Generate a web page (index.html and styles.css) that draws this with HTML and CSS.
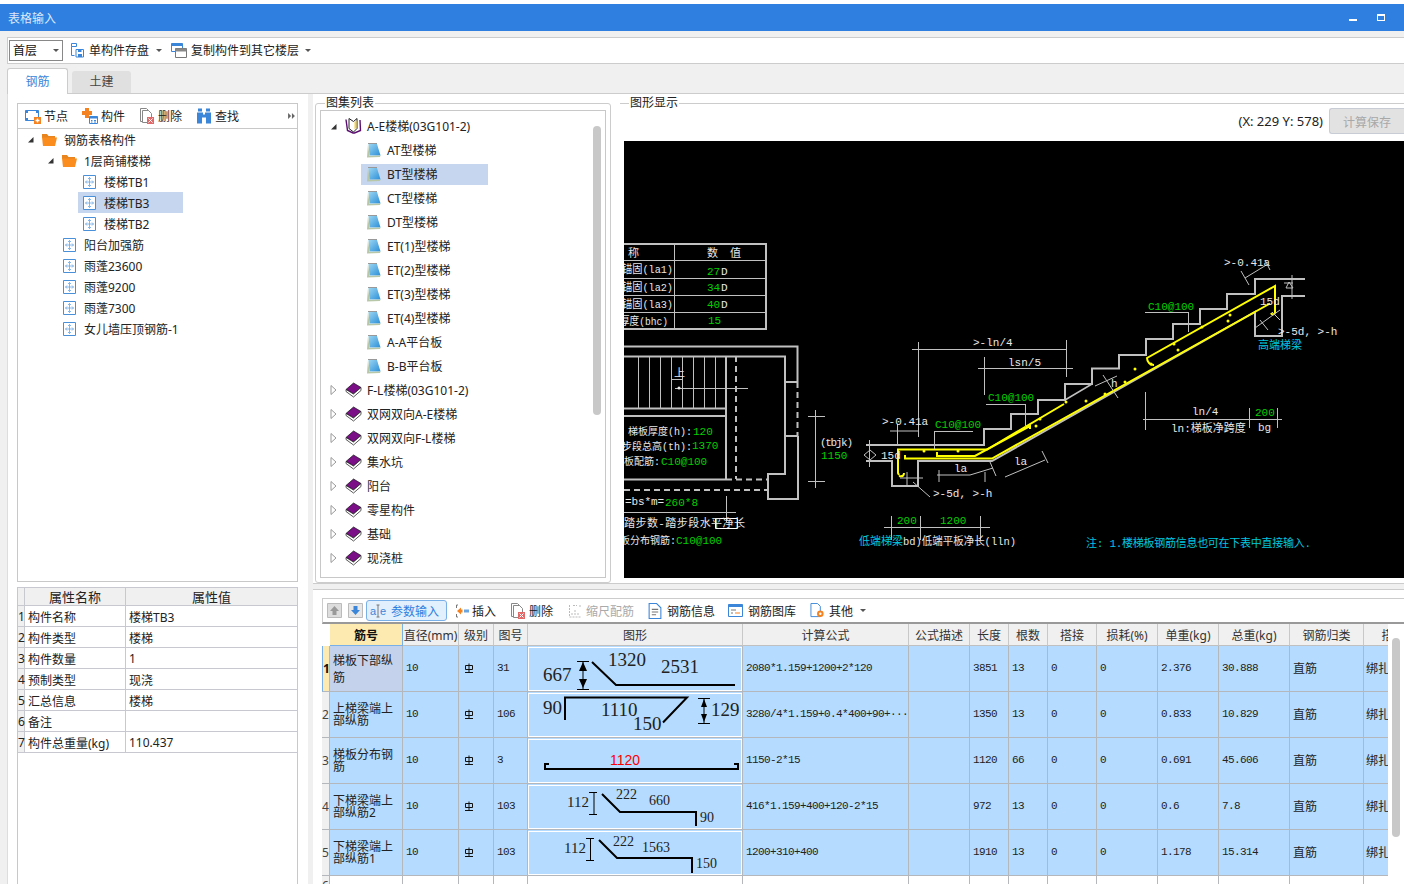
FILE: index.html
```html
<!DOCTYPE html>
<html lang="zh-CN">
<head>
    <meta charset="UTF-8">
    <meta name="viewport" content="width=device-width, initial-scale=1.0">
    <title>表格输入</title>
    <link rel="stylesheet" href="styles.css">
</head>
<body>

    <!-- icon set -->
    <svg class="defs" aria-hidden="true">
        <defs>
            <linearGradient id="note-fill" x1="0" y1="0" x2="1" y2="1">
                <stop offset="0" stop-color="#9ad6f2"/>
                <stop offset="1" stop-color="#2a8fd8"/>
            </linearGradient>
        </defs>
        <symbol id="i-save" viewBox="0 0 14 16"><path d="M1.5 1.5h5v3h-5zM1.5 4.5v9h3" fill="none" stroke="#3b86d8"/><path d="M6 7.5h7.5V15H6z" fill="#fff" stroke="#3b86d8"/><path d="M8 7.500h3.500V10H8zM8 12h4v3H8z" fill="#3b86d8"/></symbol>
        <symbol id="i-copy" viewBox="0 0 16 16"><path d="M.5 1.500h11v8H.5z" fill="#fff" stroke="#3b86d8"/><path d="M.5 1.500h11V4H.5z" fill="#3b86d8"/><path d="M4.500 6.500h11v9h-11z" fill="#fff" stroke="#777"/><path d="M4.500 6.500h11v3h-11z" fill="#888"/></symbol>
        <symbol id="i-node" viewBox="0 0 16 16"><path d="M.5 2.500h13v10H.5z" fill="#fff" stroke="#3b86d8"/><path d="M.5 2.500H3V5H.5zM11 2.500h2.500V5H11zM.5 10H3v2.500H.5z" fill="#3b86d8"/><path d="M9 9h7v7H9z" fill="#f58220"/><path d="M12.500 10.500v4M10.500 12.500h4" stroke="#fff" stroke-width="1.400"/></symbol>
        <symbol id="i-part" viewBox="0 0 16 16"><path d="M3 0h4v3h3v4H7v3H3V7H0V3h3z" fill="#f58220"/><path d="M7.500 8.500h8v7h-8z" fill="#fff" stroke="#3b86d8"/><path d="M7.500 8.500h8v2h-8z" fill="#3b86d8"/><path d="M9 12.500h1.500M12 12.500h2M9 14h1.500M12 14h2" stroke="#3b86d8"/></symbol>
        <symbol id="i-del" viewBox="0 0 14 16"><path d="M.5.500h6l3 3v10H.5z" fill="#fff" stroke="#888"/><path d="M2.500 2.500h6l3 3v9h-9z" fill="#fff" stroke="#888"/><path d="M7 9h7v7H7z" fill="#e06a6a"/><path d="M8.500 10.500l4 4M12.500 10.500l-4 4" stroke="#fff"/></symbol>
        <symbol id="i-find" viewBox="0 0 16 15"><path d="M2 0h4v3H2zM10 0h4v3h-4zM1 4h6v2h2V4h6v11h-5V9H6v6H1z" fill="#3b86d8"/></symbol>
        <symbol id="i-more" viewBox="0 0 8 7"><path d="M0 0l3.500 3.500L0 7zM4.500 0L8 3.500 4.500 7z" fill="#666"/></symbol>
        <symbol id="i-folder" viewBox="0 0 15 13"><path d="M0 1h5l1.500 2H13v2H0z" fill="#e8851e"/><path d="M0 4.500h15L13 13H1z" fill="#fb8c1e"/></symbol>
        <symbol id="i-item" viewBox="0 0 13 14"><path d="M.5.500h12v13H.5z" fill="#fff" stroke="#4a90d9"/><path d="M6.500 2.500v9M2.500 7h8M6.500 2.500L5 4M6.500 2.500L8 4M6.500 11.500L5 10M6.500 11.500L8 10M2.500 7L4 5.500M2.500 7L4 8.500M10.500 7L9 5.500M10.500 7L9 8.500" fill="none" stroke="#6aa5e0" stroke-width=".8"/></symbol>
        <symbol id="i-note" viewBox="0 0 14 15"><path d="M1.500 1h8.500l3.500 11.500H2.500z" fill="url(#note-fill)"/><path d="M0 14.500L1 1l1.500 12L13.500 12.500 13 14z" fill="#b7c7a8"/><path d="M1 .500h9" stroke="#999"/></symbol>
        <symbol id="i-bookopen" viewBox="0 0 17 16"><path d="M1 1.500l1.500 11L8 15h1.500l6-2.500L15 2" fill="#fff" stroke="#5a0f70" stroke-width="1.400"/><path d="M4 .500l4.500 3 3.500-3v10L8.500 14 4 10.500z" fill="#fff" stroke="#222"/><path d="M9.500 4l2-1.500v7l-2 2z" fill="#f3d24a"/></symbol>
        <symbol id="i-book" viewBox="0 0 16 16"><path d="M.5 7.500L8 1l7.500 4.500L8 12z" fill="#7a0f88" stroke="#111" stroke-width=".7"/><path d="M.5 7.500v2L8 15l7.500-6.500v-3L8 12z" fill="#fff" stroke="#111" stroke-width=".7"/></symbol>
        <symbol id="i-open" viewBox="0 0 7 7"><path d="M6.500 1v5.500H1z" fill="#333"/></symbol>
        <symbol id="i-closed" viewBox="0 0 7 10"><path d="M1 .500L6 5 1 9.500z" fill="#fff" stroke="#999"/></symbol>
        <symbol id="i-up" viewBox="0 0 15 15"><path d="M.5.500h14v14H.5z" fill="#ddd" stroke="#bbb"/><path d="M7.500 3L12 8H9.500v4h-4V8H3z" fill="#999"/></symbol>
        <symbol id="i-down" viewBox="0 0 15 15"><path d="M.5.500h14v14H.5z" fill="#e8e8e8" stroke="#bbb"/><path d="M7.500 12L3 7h2.500V3h4v4H12z" fill="#3b86d8"/></symbol>
        <symbol id="i-insert" viewBox="0 0 14 14"><path d="M3 1H1.500v3M3 13H1.500v-3" fill="none" stroke="#777"/><path d="M6 3.500L2 7l4 3.500v-2h1.500v-3H6z" fill="#f58220"/><path d="M9 5.500h5v3H9z" fill="#6aa5e0"/></symbol>
        <symbol id="i-scale" viewBox="0 0 14 14"><path d="M1.500 1v12h12M4 9v3M7 6v6M10 9v3M12 1v2M5 1.500h4" fill="none" stroke="#bbb" stroke-dasharray="2 1"/></symbol>
        <symbol id="i-info" viewBox="0 0 12 15"><path d="M.5.500h7l4 4v10H.5z" fill="#fff" stroke="#3b86d8"/><path d="M3 6h6M3 8.500h6M3 11h4" stroke="#777"/></symbol>
        <symbol id="i-lib" viewBox="0 0 15 13"><path d="M.5.500h14v12H.5z" fill="#fff" stroke="#3b86d8"/><path d="M.5.500h14V3H.5z" fill="#3b86d8"/><path d="M3 6h5M3 9h2" stroke="#777"/><path d="M7 9h5" stroke="#f58220"/></symbol>
        <symbol id="i-other" viewBox="0 0 15 16"><path d="M.5.500h7l3 3v11H.5z" fill="#fff" stroke="#3b86d8"/><circle cx="10.500" cy="11.500" r="3.500" fill="#f58220"/><circle cx="10.500" cy="11.500" r="1.300" fill="#fff"/></symbol>
        <symbol id="i-grade" viewBox="0 0 10 10"><path d="M1.500 2.500h7v4h-7zM5 .500v9M1 9.500h8" fill="none" stroke="#111"/></symbol>
    </svg>

    <header class="titlebar">
        <span>表格输入</span>
        <div class="win-btns">
            <span class="win-min"></span>
            <span class="win-max"></span>
        </div>
    </header>

    <div class="main-toolbar">
        <div class="combo">首层<span class="caret"></span></div>
        <div class="tool tool-save"><svg class="ic14"><use href="#i-save"/></svg>单构件存盘<span class="caret"></span></div>
        <div class="tool tool-copy"><svg class="ic16"><use href="#i-copy"/></svg>复制构件到其它楼层<span class="caret"></span></div>
    </div>

    <div class="tabs">
        <div class="tab active">钢筋</div>
        <div class="tab">土建</div>
    </div>

    <div class="workspace">
        <!-- left column -->
        <div class="left-col">
            <div class="pane tree-pane">
                <div class="pane-toolbar">
                    <div class="tool"><svg class="ic16"><use href="#i-node"/></svg>节点</div>
                    <div class="tool"><svg class="ic16"><use href="#i-part"/></svg>构件</div>
                    <div class="tool"><svg class="ic16"><use href="#i-del"/></svg>删除</div>
                    <div class="tool"><svg class="ic16"><use href="#i-find"/></svg>查找</div>
                    <svg class="more"><use href="#i-more"/></svg>
                </div>
                <ul class="tree">
                    <li class="lv0"><svg class="tw"><use href="#i-open"/></svg><svg class="ic-folder"><use href="#i-folder"/></svg>钢筋表格构件</li>
                    <li class="lv1"><svg class="tw"><use href="#i-open"/></svg><svg class="ic-folder"><use href="#i-folder"/></svg>1层商铺楼梯</li>
                    <li class="lv2"><svg class="ic-item"><use href="#i-item"/></svg>楼梯TB1</li>
                    <li class="lv2 selected"><svg class="ic-item"><use href="#i-item"/></svg>楼梯TB3</li>
                    <li class="lv2"><svg class="ic-item"><use href="#i-item"/></svg>楼梯TB2</li>
                    <li class="lv3"><svg class="ic-item"><use href="#i-item"/></svg>阳台加强筋</li>
                    <li class="lv3"><svg class="ic-item"><use href="#i-item"/></svg>雨蓬23600</li>
                    <li class="lv3"><svg class="ic-item"><use href="#i-item"/></svg>雨蓬9200</li>
                    <li class="lv3"><svg class="ic-item"><use href="#i-item"/></svg>雨蓬7300</li>
                    <li class="lv3"><svg class="ic-item"><use href="#i-item"/></svg>女儿墙压顶钢筋-1</li>
                </ul>
            </div>
            <div class="pane prop-pane">
                <table class="prop-table">
                    <colgroup><col class="pc-no"><col class="pc-name"><col class="pc-val"></colgroup>
                    <thead><tr><th></th><th>属性名称</th><th>属性值</th></tr></thead>
                    <tbody>
                        <tr><td>1</td><td>构件名称</td><td>楼梯TB3</td></tr>
                        <tr><td>2</td><td>构件类型</td><td>楼梯</td></tr>
                        <tr><td>3</td><td>构件数量</td><td>1</td></tr>
                        <tr><td>4</td><td>预制类型</td><td>现浇</td></tr>
                        <tr><td>5</td><td>汇总信息</td><td>楼梯</td></tr>
                        <tr><td>6</td><td>备注</td><td></td></tr>
                        <tr><td>7</td><td>构件总重量(kg)</td><td>110.437</td></tr>
                    </tbody>
                </table>
            </div>
        </div>

        <div class="splitter"></div>

        <!-- right column -->
        <div class="right-col">
            <div class="upper">
                <fieldset class="group atlas">
                    <legend>图集列表</legend>
                    <div class="atlas-list">
                        <ul class="atlas-tree">
                            <li><svg class="tw"><use href="#i-open"/></svg><svg class="ic-book"><use href="#i-bookopen"/></svg>A-E楼梯(03G101-2)</li>
                            <li class="child"><span class="label"><svg class="ic-note"><use href="#i-note"/></svg>AT型楼梯</span></li>
                            <li class="child selected"><span class="label"><svg class="ic-note"><use href="#i-note"/></svg>BT型楼梯</span></li>
                            <li class="child"><span class="label"><svg class="ic-note"><use href="#i-note"/></svg>CT型楼梯</span></li>
                            <li class="child"><span class="label"><svg class="ic-note"><use href="#i-note"/></svg>DT型楼梯</span></li>
                            <li class="child"><span class="label"><svg class="ic-note"><use href="#i-note"/></svg>ET(1)型楼梯</span></li>
                            <li class="child"><span class="label"><svg class="ic-note"><use href="#i-note"/></svg>ET(2)型楼梯</span></li>
                            <li class="child"><span class="label"><svg class="ic-note"><use href="#i-note"/></svg>ET(3)型楼梯</span></li>
                            <li class="child"><span class="label"><svg class="ic-note"><use href="#i-note"/></svg>ET(4)型楼梯</span></li>
                            <li class="child"><span class="label"><svg class="ic-note"><use href="#i-note"/></svg>A-A平台板</span></li>
                            <li class="child"><span class="label"><svg class="ic-note"><use href="#i-note"/></svg>B-B平台板</span></li>
                            <li><svg class="tw twc"><use href="#i-closed"/></svg><svg class="ic-book"><use href="#i-book"/></svg>F-L楼梯(03G101-2)</li>
                            <li><svg class="tw twc"><use href="#i-closed"/></svg><svg class="ic-book"><use href="#i-book"/></svg>双网双向A-E楼梯</li>
                            <li><svg class="tw twc"><use href="#i-closed"/></svg><svg class="ic-book"><use href="#i-book"/></svg>双网双向F-L楼梯</li>
                            <li><svg class="tw twc"><use href="#i-closed"/></svg><svg class="ic-book"><use href="#i-book"/></svg>集水坑</li>
                            <li><svg class="tw twc"><use href="#i-closed"/></svg><svg class="ic-book"><use href="#i-book"/></svg>阳台</li>
                            <li><svg class="tw twc"><use href="#i-closed"/></svg><svg class="ic-book"><use href="#i-book"/></svg>零星构件</li>
                            <li><svg class="tw twc"><use href="#i-closed"/></svg><svg class="ic-book"><use href="#i-book"/></svg>基础</li>
                            <li><svg class="tw twc"><use href="#i-closed"/></svg><svg class="ic-book"><use href="#i-book"/></svg>现浇桩</li>
                        </ul>
                        <div class="thumb"></div>
                    </div>
                </fieldset>

                <fieldset class="group figure">
                    <legend>图形显示</legend>
                    <div class="figure-info">
                        <span class="coords">(X: 229 Y: 578)</span>
                        <button class="calc-btn" disabled>计算保存</button>
                    </div>
                    <svg class="drawing" viewBox="624 141 780 437" width="780" height="437">
                        <!-- parameter table -->
                        <path class="thin" d="M624 243.500h142M624 260.500h142M624 278.500h142M624 295.500h142M624 312.500h142M674.500 243v86"/>
                        <path class="wall" d="M624 244h142v85H624"/>
                        <text class="w" x="628" y="257">称</text>
                        <text class="w" x="707" y="257" textLength="34">数  值</text>
                        <text class="w" x="622" y="273" textLength="51" lengthAdjust="spacingAndGlyphs">锚固(la1)</text>
                        <text class="w" x="622" y="291" textLength="51" lengthAdjust="spacingAndGlyphs">锚固(la2)</text>
                        <text class="w" x="622" y="308" textLength="51" lengthAdjust="spacingAndGlyphs">锚固(la3)</text>
                        <text class="w" x="620" y="325" textLength="48" lengthAdjust="spacingAndGlyphs">厚度(bhc)</text>
                        <text class="g" x="707" y="275">27</text><text class="w" x="721" y="275">D</text>
                        <text class="g" x="707" y="291">34</text><text class="w" x="721" y="291">D</text>
                        <text class="g" x="707" y="308">40</text><text class="w" x="721" y="308">D</text>
                        <text class="g" x="708" y="324">15</text>

                        <!-- stair plan -->
                        <path class="wall" d="M624 346.500h173.500V382M624 356.500h161V474h-17v25h30V436M785 382h13M785 436h13M624 408.500h102M624 416h102M726 356v123M624 479.500h102"/>
                        <path class="wall dash" d="M736 356v123M726 479.500h42M624 490h144M785 382v54M797.500 382v54"/>
                        <path class="stairs" d="M638.500 356v52M649.500 356v52M660.500 356v52M671.500 356v52M682.500 356v52M693.500 356v52M704.500 356v52M715.500 356v52"/>
                        <path class="thin" d="M675 388.500h73M672 379.500h10M808 416.500h17M808 481.500h17M815.500 410v78M726.500 496v26M624 512.500h112"/>
                        <path class="white-rect" d="M715.500 518.500h22v10h-22z"/>
                        <circle class="w" cx="679" cy="388" r="1.500"/>
                        <text class="w" x="674" y="377">上</text>
                        <text class="w small" x="628" y="435">梯板厚度(h):</text><text class="g" x="693" y="435">120</text>
                        <text class="w small" x="622" y="450">步段总高(th):</text><text class="g" x="692" y="449">1370</text>
                        <text class="w small" x="624" y="465">板配筋:</text><text class="g" x="661" y="465">C10@100</text>
                        <text class="w" x="625" y="505" textLength="39">=bs*m=</text><text class="g" x="665" y="506">260*8</text>
                        <text class="w" x="624" y="527" textLength="121">踏步数-踏步段水平净长</text>
                        <text class="w small" x="620" y="544">板分布钢筋:</text><text class="g" x="676" y="544">C10@100</text>
                        <text class="w" x="820" y="446" textLength="33">(tbjk)</text>
                        <text class="g" x="821" y="459">1150</text>

                        <!-- stair section concrete -->
                        <path class="wall" d="M866 445h118V429h27V414h27V400h27V384h27V368.500h27V355h27V339h27V324h27V309h27V294h28V279h50M1305 296h-23v40h-27v-24L992 461H918v25H892V461h-26"/>
                        <path class="wall slim" d="M1065 400l27-16"/>

                        <!-- rebar -->
                        <path class="bar" d="M899 475l-1-2V449.500h89l77-45.500M899 476c4 1 5-1 5-3"/>
                        <path class="bar" d="M905 455v3.500h87l278-155"/>
                        <path class="bar" d="M937 452v4h38l55-30v3"/>
                        <path class="bar" d="M1154 365c-4 0-7-3-7-7l128-72v26c0 3-3 3-4 1"/>
                        <g class="dots">
                            <circle cx="924" cy="451" r="1.500"/><circle cx="958" cy="451" r="1.500"/><circle cx="1036" cy="426" r="1.500"/><circle cx="1040" cy="419" r="1.500"/><circle cx="1066" cy="402" r="1.500"/><circle cx="1086" cy="401" r="1.500"/><circle cx="1105" cy="394" r="1.500"/><circle cx="1125" cy="382" r="1.500"/><circle cx="1135" cy="369" r="1.500"/><circle cx="1151" cy="364" r="1.500"/><circle cx="1174" cy="344" r="1.500"/><circle cx="1202" cy="327" r="1.500"/><circle cx="1178" cy="350" r="1.500"/><circle cx="1228" cy="321" r="1.500"/><circle cx="1230" cy="315" r="1.500"/>
                        </g>

                        <!-- dimensions -->
                        <path class="thin" d="M912 349.500h154M918.500 342v95M1066.500 340v37M978 368.500h95M984.500 357v38M986 404.500h39M1025.500 404v23M1145 312.500h43M1188.500 312v20M1143 419.500h139M1145.500 392v38M1249.500 408v20M1277.500 408v20M884 527.500h106M891.500 516v24M920.500 516v24M980.500 516v24M1245 278l23-14M1241 271l8 14M1265 260l5 10M1292 275v24M1286 288h7l-4-6zM1284 283h9M1255 328l25-18M1272 312l8 8M1260 320l8 10M1095 386l22-10M1103 375l15 23M869.500 440v27M864 455l6-5 6 5-6 5zM897.500 424v21M890 431h28M934.500 431v18M934 431.500h39M900 478h23M907 472v14M913 482l17 15M937 475h33l23-7M939 470v12M985 472v10M990 462l6 14M1005 477l40-17M1042 451l6 12"/>
                        <text class="w" x="882" y="425">&gt;-0.41a</text>
                        <text class="g" x="935" y="428">C10@100</text>
                        <text class="w" x="973" y="346">&gt;-ln/4</text>
                        <text class="w" x="1008" y="366">lsn/5</text>
                        <text class="g" x="988" y="401">C10@100</text>
                        <text class="w" x="1111" y="387">h</text>
                        <text class="g" x="1148" y="310">C10@100</text>
                        <text class="w" x="1224" y="266">&gt;-0.41a</text>
                        <text class="w" x="1260" y="305">15d</text>
                        <text class="w" x="1278" y="335">&gt;-5d, &gt;-h</text>
                        <text class="c" x="1258" y="349">高端梯梁</text>
                        <text class="w" x="1192" y="415">ln/4</text>
                        <text class="g" x="1255" y="416">200</text>
                        <text class="w" x="1171" y="432">ln:梯板净跨度</text>
                        <text class="w" x="1258" y="431">bg</text>
                        <text class="w" x="954" y="472">la</text>
                        <text class="w" x="1014" y="465">la</text>
                        <text class="w" x="881" y="459">15d</text>
                        <text class="w" x="933" y="497">&gt;-5d, &gt;-h</text>
                        <text class="g" x="897" y="524">200</text>
                        <text class="g" x="940" y="524">1200</text>
                        <text class="c" x="859" y="545">低端梯梁</text>
                        <text class="w" x="903" y="545" textLength="113" lengthAdjust="spacingAndGlyphs">bd)低端平板净长(lln)</text>
                        <text class="c" x="1086" y="547" textLength="225">注: 1.楼梯板钢筋信息也可在下表中直接输入.</text>
                    </svg>
                </fieldset>
            </div>

            <div class="band"></div>

            <div class="lower">
                <div class="table-toolbar">
                    <svg class="ic15 t-up"><use href="#i-up"/></svg>
                    <svg class="ic15 t-down"><use href="#i-down"/></svg>
                    <div class="tool t-param">
                        <svg class="ic-ale" viewBox="0 0 17 14"><text x="0" y="11" class="ale">a</text><path d="M8 1v12M6.500 1h3M6.500 13h3" stroke="#777" fill="none"/><text x="10" y="11" class="ale">e</text></svg>参数输入
                    </div>
                    <div class="tool t-insert"><svg class="ic14"><use href="#i-insert"/></svg>插入</div>
                    <div class="tool t-del"><svg class="ic16"><use href="#i-del"/></svg>删除</div>
                    <div class="tool t-scale"><svg class="ic14"><use href="#i-scale"/></svg>缩尺配筋</div>
                    <div class="tool t-info"><svg class="ic14"><use href="#i-info"/></svg>钢筋信息</div>
                    <div class="tool t-lib"><svg class="ic15"><use href="#i-lib"/></svg>钢筋图库</div>
                    <div class="tool t-other"><svg class="ic15"><use href="#i-other"/></svg>其他<span class="caret"></span></div>
                </div>
                <div class="rebar-wrap">
                    <table class="rebar">
                        <colgroup>
                            <col class="c-no"><col class="c-name"><col class="c-dia"><col class="c-lv"><col class="c-fig"><col class="c-shape"><col class="c-calc"><col class="c-desc"><col class="c-len"><col class="c-num"><col class="c-lap"><col class="c-loss"><col class="c-unit"><col class="c-total"><col class="c-type"><col class="c-bind">
                        </colgroup>
                        <thead>
                            <tr>
                                <th class="corner"></th><th class="current">筋号</th><th>直径(mm)</th><th>级别</th><th>图号</th><th>图形</th><th>计算公式</th><th>公式描述</th><th>长度</th><th>根数</th><th>搭接</th><th>损耗(%)</th><th>单重(kg)</th><th>总重(kg)</th><th>钢筋归类</th><th>搭接形式</th>
                            </tr>
                        </thead>
                        <tbody>
                            <tr class="row-current">
                                <td class="no">1</td><td class="name">梯板下部纵筋</td><td class="num">10</td><td class="grade"><svg class="ic-grade"><use href="#i-grade"/></svg></td><td class="num">31</td>
                                <td class="shape"><svg class="shape-box" viewBox="529 648 212 42">
                                    <text class="s19" x="543" y="681">667</text><text class="s19" x="608" y="666">1320</text><text class="s19" x="661" y="673">2531</text>
                                    <path class="fine" d="M577 661.500h12M577 689.500h12M583 661v28"/><path d="M583 662l-4 9h8zM583 688l-4-9h8z"/>
                                    <path class="rebar-line" d="M592 662l24 23h119"/>
                                </svg></td>
                                <td class="num">2080*1.159+1200+2*120</td><td></td><td class="num">3851</td><td class="num">13</td><td class="num">0</td><td class="num">0</td><td class="num">2.376</td><td class="num">30.888</td><td>直筋</td><td class="bind">绑扎</td>
                            </tr>
                            <tr>
                                <td class="no">2</td><td class="name tight">上梯梁端上部纵筋</td><td class="num">10</td><td class="grade"><svg class="ic-grade"><use href="#i-grade"/></svg></td><td class="num">106</td>
                                <td class="shape"><svg class="shape-box" viewBox="529 694 212 42">
                                    <text class="s19" x="543" y="714">90</text><text class="s19" x="601" y="716">1110</text><text class="s19" x="633" y="730">150</text><text class="s19" x="711" y="716">129</text>
                                    <path class="fine" d="M698 698.500h12M698 723.500h12M704 698v25"/><path d="M704 699l-3 8h6zM704 722l-3-8h6z"/>
                                    <path class="rebar-line" d="M565 720v-22.500h122l-24 25"/>
                                </svg></td>
                                <td class="num">3280/4*1.159+0.4*400+90+···</td><td></td><td class="num">1350</td><td class="num">13</td><td class="num">0</td><td class="num">0</td><td class="num">0.833</td><td class="num">10.829</td><td>直筋</td><td class="bind">绑扎</td>
                            </tr>
                            <tr>
                                <td class="no">3</td><td class="name tight">梯板分布钢筋</td><td class="num">10</td><td class="grade"><svg class="ic-grade"><use href="#i-grade"/></svg></td><td class="num">3</td>
                                <td class="shape"><svg class="shape-box" viewBox="529 740 212 42">
                                    <text class="red" x="610" y="765">1120</text>
                                    <path class="rebar-line" d="M549 764h-4v5h193v-5h-4"/>
                                </svg></td>
                                <td class="num">1150-2*15</td><td></td><td class="num">1120</td><td class="num">66</td><td class="num">0</td><td class="num">0</td><td class="num">0.691</td><td class="num">45.606</td><td>直筋</td><td class="bind">绑扎</td>
                            </tr>
                            <tr>
                                <td class="no">4</td><td class="name tight">下梯梁端上部纵筋2</td><td class="num">10</td><td class="grade"><svg class="ic-grade"><use href="#i-grade"/></svg></td><td class="num">103</td>
                                <td class="shape"><svg class="shape-box" viewBox="529 786 212 42">
                                    <text class="s15" x="567" y="807">112</text><text class="s14" x="616" y="799">222</text><text class="s14" x="649" y="805">660</text><text class="s14" x="700" y="822">90</text>
                                    <path class="fine" d="M589 792.500h8M589 814.500h8M594 792v22"/>
                                    <path class="rebar-line" d="M602 794l18 18h76v14"/>
                                </svg></td>
                                <td class="num">416*1.159+400+120-2*15</td><td></td><td class="num">972</td><td class="num">13</td><td class="num">0</td><td class="num">0</td><td class="num">0.6</td><td class="num">7.8</td><td>直筋</td><td class="bind">绑扎</td>
                            </tr>
                            <tr>
                                <td class="no">5</td><td class="name tight">下梯梁端上部纵筋1</td><td class="num">10</td><td class="grade"><svg class="ic-grade"><use href="#i-grade"/></svg></td><td class="num">103</td>
                                <td class="shape"><svg class="shape-box" viewBox="529 832 212 42">
                                    <text class="s15" x="564" y="853">112</text><text class="s14" x="613" y="846">222</text><text class="s14" x="642" y="852">1563</text><text class="s14" x="696" y="868">150</text>
                                    <path class="fine" d="M586 838.500h8M586 860.500h8M590.500 838v22"/>
                                    <path class="rebar-line" d="M599 840l18 18h75v15"/>
                                </svg></td>
                                <td class="num">1200+310+400</td><td></td><td class="num">1910</td><td class="num">13</td><td class="num">0</td><td class="num">0</td><td class="num">1.178</td><td class="num">15.314</td><td>直筋</td><td class="bind">绑扎</td>
                            </tr>
                            <tr class="row-empty">
                                <td class="no">6</td><td></td><td></td><td></td><td></td><td></td><td></td><td></td><td></td><td></td><td></td><td></td><td></td><td></td><td></td><td></td>
                            </tr>
                        </tbody>
                    </table>
                </div>
                <div class="v-thumb"></div>
            </div>
        </div>
    </div>

</body>
</html>
```

FILE: styles.css
```css
/* page */
html, body {
    margin: 0;
    padding: 0;
}

body {
    width: 1404px;
    height: 884px;
    overflow: hidden;
    background-color: #f0f0f0;
    color: #222;
    font-family: "Noto Sans", "Noto Sans CJK SC", sans-serif;
    font-size: 12px;
    border-top: 4px solid #fff;
    box-sizing: border-box;
}

ul { list-style: none; margin: 0; padding: 0; }

.defs { display: block; width: 0; height: 0; overflow: hidden; }
.ale { font: 11px "Liberation Sans", sans-serif; fill: #3b86d8; }

/* icon sizes */
svg { flex: none; }
.ic14 { width: 14px; height: 16px; }
.ic15 { width: 15px; height: 15px; }
.ic16 { width: 16px; height: 16px; }
.ic-folder { width: 15px; height: 13px; margin-right: 7px; }
.ic-item { width: 13px; height: 14px; margin-right: 8px; }
.ic-note { width: 14px; height: 15px; margin-right: 6px; }
.ic-book { width: 17px; height: 16px; margin-right: 5px; }
.ic-ale { width: 17px; height: 14px; }
.ic-grade { width: 10px; height: 10px; display: block; }
.tw { width: 7px; height: 7px; }
.twc { height: 10px; }

.caret {
    display: inline-block;
    border-top: 3px solid #555;
    border-left: 3px solid transparent;
    border-right: 3px solid transparent;
    margin-left: 2px;
}

/* title bar */
.titlebar {
    height: 27px;
    background-color: #2e7fe0;
    color: #dce8f8;
    display: flex;
    align-items: center;
    justify-content: space-between;
    padding: 0 19px 0 8px;
}

.win-btns { display: flex; align-items: center; gap: 20px; }
.win-min { width: 8px; height: 2px; background: #fff; margin-top: 5px; }
.win-max { width: 6px; height: 4px; border: 1px solid #fff; border-top-width: 2px; }

/* main toolbar */
.main-toolbar {
    margin: 6px 0 0 7px;
    height: 27px;
    background: #fff;
    border-top: 1px solid #ccc;
    border-bottom: 1px solid #ccc;
    border-left: 1px solid #ccc;
    box-sizing: border-box;
    display: flex;
    align-items: center;
    padding-left: 1px;
}

.combo {
    width: 54px;
    height: 21px;
    box-sizing: border-box;
    border: 1px solid #888;
    padding: 0 3px 1px;
    display: flex;
    align-items: center;
    justify-content: space-between;
    color: #111;
}

.tool { display: flex; align-items: center; gap: 5px; white-space: nowrap; }
.tool-save { margin: -1px 0 0 7px; }
.tool-copy { margin: -1px 0 0 9px; gap: 4px; }

/* tabs */
.tabs { display: flex; height: 29px; padding-left: 7px; box-sizing: border-box; align-items: flex-end; gap: 4px; }

.tab {
    width: 59px;
    height: 22px;
    background: #e0e0e0;
    border-radius: 3px 3px 0 0;
    text-align: center;
    line-height: 22px;
    color: #444;
}

.tab.active {
    width: 61px;
    height: 26px;
    line-height: 26px;
    background: #fff;
    border: 1px solid #ccc;
    border-bottom: none;
    color: #3b86d8;
    box-sizing: border-box;
    position: relative;
    z-index: 1;
    margin-bottom: -1px;
}

/* workspace */
.workspace {
    height: 790px;
    margin-left: 7px;
    background: #fff;
    border-top: 1px solid #ccc;
    border-left: 1px solid #ddd;
    display: flex;
}

.left-col {
    width: 300px;
    box-sizing: border-box;
    padding: 9px 10px 0 9px;
    flex: none;
    display: flex;
    flex-direction: column;
    gap: 5px;
}

.pane { border: 1px solid #c8c8c8; box-sizing: border-box; background: #fff; }
.tree-pane { height: 479px; }
.prop-pane { flex: 1; border-bottom: none; border-top: none; }

.pane-toolbar {
    height: 24px;
    border-bottom: 1px solid #c8c8c8;
    display: flex;
    align-items: center;
    padding-left: 7px;
}

.pane-toolbar .tool { gap: 3px; margin-right: 14px; }
.more { width: 7px; height: 6px; margin-left: auto; margin-right: 2px; }

/* left tree */
.tree li {
    height: 21px;
    display: flex;
    align-items: center;
    white-space: nowrap;
}

.tree .tw { margin-right: 8px; }
.lv0 { padding-left: 9px; }
.lv1 { padding-left: 29px; }
.lv2 { padding-left: 65px; }
.lv3 { padding-left: 45px; }

.tree li.selected {
    background: #c5d6ee;
    margin-left: 60px;
    width: 105px;
    padding-left: 5px;
    box-sizing: border-box;
}

/* property table */
.prop-table {
    width: 280px;
    table-layout: fixed;
    border-collapse: separate;
    border-spacing: 0;
}

.pc-no { width: 7px; }
.pc-name { width: 101px; }

.prop-table th {
    height: 17px;
    padding: 1px 0 0;
    background: #f0f0f0;
    border-right: 1px solid #c8c8d0;
    border-bottom: 1px solid #c8c8d0;
    border-top: 1px solid #c8c8d0;
    box-sizing: content-box;
    font-weight: normal;
    font-size: 13px;
    line-height: 16px;
}

.prop-table th { height: 16px; }

.prop-table td {
    height: 19px;
    padding: 1px 3px 0;
    border-right: 1px solid #c8c8d0;
    border-bottom: 1px solid #c8c8d0;
    white-space: nowrap;
    overflow: hidden;
}

.prop-table td:first-child { padding: 1px 0 0; background: #f0f0f0; overflow: visible; }

.splitter { width: 5px; background: #f0f0f0; flex: none; }

/* right column */
.right-col { flex: 1; min-width: 0; display: flex; flex-direction: column; }

.upper { height: 489px; display: flex; }

.group {
    margin: 2px 0 0;
    padding: 0;
    border: 1px solid #ccc;
    min-width: 0;
}

.group legend { font-size: 12px; line-height: 14px; padding: 0 1px; }

.atlas {
    width: 296px;
    height: 487px;
    margin-left: 2px;
    border-radius: 3px;
    box-sizing: border-box;
    padding: 0 4px 5px;
}

.atlas legend { margin-left: 5px; }

.atlas-list {
    height: 468px;
    border: 1px solid #c8c8c8;
    box-sizing: border-box;
    overflow: hidden;
    position: relative;
}

.atlas-tree { padding-top: 3px; }

.atlas-tree li {
    height: 24px;
    display: flex;
    align-items: center;
    padding-left: 9px;
    white-space: nowrap;
}

.atlas-tree li .tw { margin-right: 8px; }
.atlas-tree li.child { padding-left: 40px; }

.atlas-tree .label {
    display: flex;
    align-items: center;
    height: 21px;
    width: 127px;
    box-sizing: border-box;
    padding-left: 6px;
}

.atlas-tree .selected .label { background: #c5d6ee; }

.thumb {
    position: absolute;
    right: 4px;
    top: 15px;
    width: 8px;
    height: 289px;
    background: #c8c8c8;
    border-radius: 4px;
}

.figure {
    flex: 1;
    margin-left: 9px;
    height: 487px;
    box-sizing: border-box;
    border-left: none;
    border-right: none;
    border-bottom: none;
    padding: 0 0 0 4px;
}

.figure legend { margin-left: 5px; }

.figure-info {
    height: 33px;
    margin-top: -2px;
    display: flex;
    justify-content: flex-end;
    align-items: flex-start;
    gap: 6px;
}

.coords { font-size: 13px; line-height: 26px; }

.calc-btn {
    width: 75px;
    height: 26px;
    padding: 0;
    border: 1px solid #c8ccd4;
    border-right: none;
    border-radius: 3px 0 0 3px;
    background: #e2e2e2;
    color: #a8a8a8;
    font: 12px "Noto Sans CJK SC", sans-serif;
}

.drawing { display: block; background: #000; }
.drawing text { font: 11px "Liberation Mono", "Noto Sans CJK SC", monospace; }
.drawing text.small { font-size: 10px; }
.drawing .w { fill: #e8e8e8; }
.drawing .g { fill: #00d000; }
.drawing .c { fill: #00c8e0; }
.drawing path { fill: none; }
.wall { stroke: #c0c0c0; stroke-width: 2; }
.wall.dash { stroke-dasharray: 6 4; }
.wall.slim { stroke-width: 1.5; }
.stairs { stroke: #c0c0c0; stroke-width: 1; }
.thin { stroke: #c0c0c0; stroke-width: 1; }
.white-rect { stroke: #fff; stroke-width: 1; }
.bar { stroke: #ffff00; stroke-width: 2; }
.dots { fill: #ffff00; }

/* lower pane */
.band {
    height: 5px;
    background: #f0f0f0;
    border-top: 1px solid #ccc;
    border-bottom: 1px solid #ccc;
}

.lower {
    flex: 1;
    min-height: 0;
    padding: 8px 0 0 9px;
    position: relative;
    overflow: hidden;
}

.table-toolbar {
    height: 26px;
    box-sizing: border-box;
    border-top: 1px solid #ccc;
    border-left: 1px solid #ccc;
    border-bottom: 2px solid #999;
    display: flex;
    align-items: center;
}

.t-up { margin-left: 4px; }
.t-down { margin-left: 6px; }

.t-param {
    margin-left: 3px;
    width: 81px;
    height: 21px;
    box-sizing: border-box;
    background: #e2effc;
    border: 1px solid #7ab0e8;
    border-radius: 3px;
    color: #2e7fe0;
    padding-left: 3px;
    gap: 4px;
}

.t-insert { margin-left: 8px; gap: 3px; }
.t-del { margin-left: 14px; gap: 3px; }
.t-scale { margin-left: 15px; gap: 4px; color: #aaa; }
.t-info { margin-left: 14px; gap: 5px; }
.t-lib { margin-left: 13px; gap: 5px; }
.t-other { margin-left: 14px; gap: 4px; }
.t-other .caret { margin-left: 3px; }

.rebar-wrap { width: 1066px; overflow: hidden; }

.rebar {
    width: 1126px;
    table-layout: fixed;
    border-collapse: separate;
    border-spacing: 0;
}

.c-no { width: 8px; }
.c-name { width: 73px; }
.c-dia { width: 56px; }
.c-lv { width: 35px; }
.c-fig { width: 34px; }
.c-shape { width: 215px; }
.c-calc { width: 166px; }
.c-desc { width: 61px; }
.c-len { width: 39px; }
.c-num { width: 39px; }
.c-lap { width: 49px; }
.c-loss { width: 61px; }
.c-unit { width: 61px; }
.c-total { width: 71px; }
.c-type { width: 74px; }

.rebar th {
    height: 22px;
    padding: 0;
    background: #f0f0f0;
    font-weight: normal;
    border-right: 1px solid #c8c8c8;
    border-bottom: 1px solid #c0c0c0;
    box-sizing: border-box;
    white-space: nowrap;
    overflow: hidden;
    color: #333;
}

.rebar th.corner { background: #fff; border: none; }
.rebar th.current { background: #fdeab0; font-weight: bold; border-right: 1px solid #7ab0e8; border-bottom: 1px solid #7ab0e8; color: #111; }

.rebar td {
    height: 46px;
    box-sizing: border-box;
    padding: 0 3px 2px;
    background: #b5dcfe;
    border-right: 1px solid #b4b8bc;
    border-bottom: 1px solid #b4b8bc;
    white-space: nowrap;
    overflow: hidden;
}

.rebar td.no { padding: 0; background: #f0f0f0; text-align: center; overflow: visible; color: #444; }
.row-current td.no { background: #fdeab0; border-left: 1px solid #7ab0e8; font-weight: bold; color: #111; }
.rebar .row-current td.name { background: #c4d2ec; }

.rebar td.name { white-space: normal; line-height: 17px; padding-bottom: 0; }
.rebar td.name.tight { line-height: 12px; }
.rebar td.num { font: 11px "Liberation Mono", monospace; letter-spacing: -.6px; }
.rebar td.grade { padding-left: 5px; }
.rebar td.bind { padding-left: 2px; }
.rebar td.shape { padding: 0; vertical-align: top; }

.rebar .row-empty td { background: #fff; }
.rebar .row-empty td.no { background: #f0f0f0; vertical-align: top; padding-top: 1px; }

.shape-box {
    display: block;
    width: 214px;
    height: 44px;
    margin-top: 1px;
    border: 1px solid #fff;
    box-sizing: border-box;
}

.shape-box text { fill: #222; }
.s19 { font: 19px "Liberation Serif", serif; }
.s15 { font: 15px "Liberation Serif", serif; }
.s14 { font: 14px "Liberation Serif", serif; }
.red { font: 14px "Liberation Sans", sans-serif; }
.shape-box text.red { fill: #f00; }
.rebar-line { fill: none; stroke: #000; stroke-width: 2; }
.fine { fill: none; stroke: #000; stroke-width: 1; }

.v-thumb {
    position: absolute;
    right: 4px;
    top: 48px;
    width: 8px;
    height: 199px;
    background: #c8c8c8;
    border-radius: 4px;
}
```
